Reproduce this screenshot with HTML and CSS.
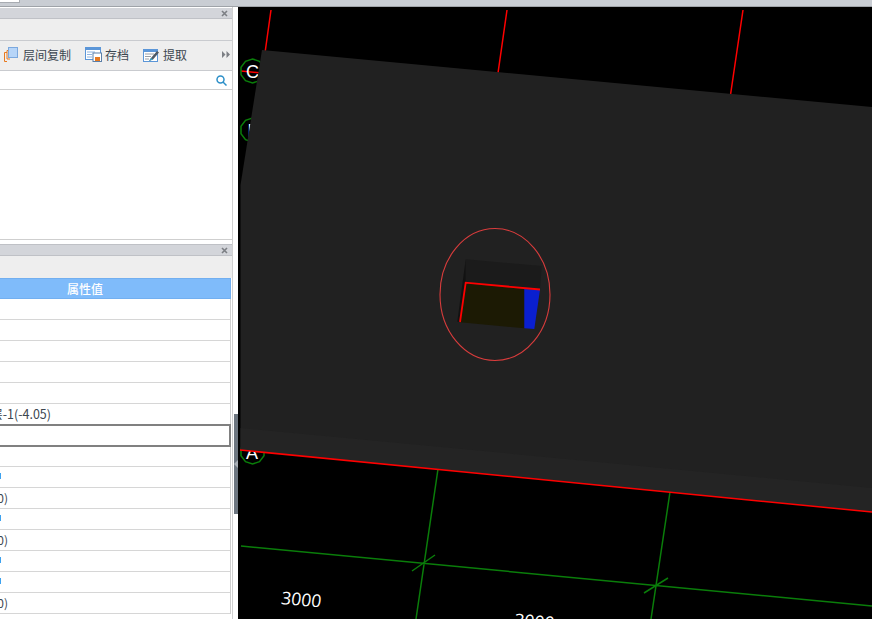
FILE: index.html
```html
<!DOCTYPE html>
<html lang="zh-CN">
<head>
<meta charset="utf-8">
<title>属性</title>
<link rel="stylesheet" href="styles.css">
</head>
<body>
<header class="topbar"><div class="tab"></div></header>
<main class="shell">
  <aside class="sidebar">
    <section class="panel panel-top">
      <div class="title"><svg class="close" viewBox="0 0 7 7"><path d="M1 1l5 5M6 1L1 6"/></svg></div>
      <div class="subbar"></div>
      <div class="toolbar">
        <button class="tool tool-copy">
          <svg class="icon" width="14" height="15" viewBox="0 0 14 15">
            <path class="orange" d="M3 5.500H.5v9H3"/>
            <path class="orange" d="M5 3.500H3v8.500h3"/>
            <rect x="4.500" y=".5" width="9" height="10" fill="#b7d5f8" stroke="#7ba8de"/>
          </svg>层间复制</button>
        <button class="tool">
          <svg class="icon" width="17" height="15" viewBox="0 0 17 15">
            <rect x=".5" y=".5" width="15" height="12" fill="#fff" stroke="#5b96d8"/>
            <rect x="0" y="0" width="16" height="3" fill="#5b96d8"/>
            <path d="M2 5h8M2 7.500h5M2 10h5" stroke="#8fb4e0"/>
            <rect x="8" y="6" width="8.500" height="8.500" fill="#fff" stroke="#5b7fa8"/>
            <rect x="10" y="10" width="5" height="4" fill="#e8791e"/>
          </svg>存档</button>
        <button class="tool">
          <svg class="icon" width="17" height="14" viewBox="0 0 17 14">
            <rect x=".5" y="1.500" width="14" height="12" fill="#fff" stroke="#5b96d8"/>
            <rect x="0" y="1" width="15" height="3" fill="#5b96d8"/>
            <path d="M2 6h9M2 8.500h6M2 11h4" stroke="#9a9fa6"/>
            <path d="M6 13l2-3 6-7 2 1.500-6 7z" fill="#4f5a66"/>
            <path d="M6 13l2-3 2 1.500z" fill="#37a3c9"/>
          </svg>提取</button>
        <svg class="more" viewBox="0 0 8 7"><path d="M0 0l3.500 3.500L0 7zM4.500 0L8 3.500 4.500 7z"/></svg>
      </div>
      <div class="search">
        <svg class="lens" viewBox="0 0 11 11"><circle cx="4.500" cy="4.500" r="3.500"/><path d="M7 7l3.500 3.500"/></svg>
      </div>
      <div class="list"></div>
    </section>
    <section class="panel panel-props">
      <div class="title"><svg class="close" viewBox="0 0 7 7"><path d="M1 1l5 5M6 1L1 6"/></svg></div>
      <div class="subbar subbar-tall"></div>
      <div class="table">
        <div class="head">属性值</div>
        <div class="row"></div>
        <div class="row"></div>
        <div class="row"></div>
        <div class="row"></div>
        <div class="row"></div>
        <div class="row"><span class="clip clip-wide"><span>层-1(-4.05)</span></span></div>
        <div class="row row-selected"></div>
        <div class="row"></div>
        <div class="row"><span class="tick"></span></div>
        <div class="row"><span class="clip"><span>(0)</span></span></div>
        <div class="row"><span class="tick"></span></div>
        <div class="row"><span class="clip"><span>(0)</span></span></div>
        <div class="row"><span class="tick"></span></div>
        <div class="row"><span class="tick"></span></div>
        <div class="row"><span class="clip"><span>(0)</span></span></div>
      </div>
    </section>
  </aside>
  <div class="splitter">
    <div class="grip"><svg class="grip-arrow" viewBox="0 0 4 8"><path d="M4 0v8L0 4z"/></svg></div>
  </div>
  <svg class="canvas" viewBox="238 7 634 612" preserveAspectRatio="xMinYMin slice">
    <defs>
      <polygon id="bubble" points="0,-12 7,-9.700 11.500,-3.700 11.500,3.700 7,9.700 0,12 -7,9.700 -11.500,3.700 -11.500,-3.700 -7,-9.700"/>
    </defs>
    <rect x="238" y="7" width="634" height="612" fill="#000"/>
    <g class="axis-red">
      <path d="M271 10L264 60M507 10L497 80M743 10L729 105"/>
      <path d="M241 71L262 73"/>
    </g>
    <g class="axis-green">
      <use href="#bubble" x="252.500" y="71"/>
      <use href="#bubble" x="252.500" y="130"/>
      <use href="#bubble" x="252.500" y="452"/>
      <path d="M438 469L416 619M670 492L651 619M241 546L872 606"/>
      <path d="M412 571L435 555M644 593L668 578"/>
    </g>
    <text class="label" x="246" y="78">C</text>
    <text class="label" x="247.500" y="137">B</text>
    <text class="label" x="246" y="458.500">A</text>
    <polygon points="262,50 872,107 872,512 240.500,450 240.500,185" fill="#212121"/>
    <polygon points="240.500,428 872,488 872,512 240.500,450" fill="#242424"/>
    <path class="axis-red" d="M240 450L872 512"/>
    <polygon points="465.700,259.300 541.700,266 540,289.500 465.700,283" fill="#1b1b1b"/>
    <polygon points="465.700,259.300 465.700,283 460,322 457.300,321.700" fill="#121212"/>
    <polygon points="465.700,283.300 524.300,289 524.300,328.300 460,322.300" fill="#1c1a04"/>
    <polygon points="524.300,289 540,289.700 534.300,329 524.300,328.300" fill="#0a1fd0"/>
    <path class="axis-red thick" d="M460 322L465.700 282.700L540 289.500"/>
    <ellipse cx="495" cy="294.500" rx="55" ry="66" fill="none" stroke="#d83c3c" stroke-width="1.100"/>
    <text class="dim" transform="translate(280.500 604) rotate(5) skewX(-3)">3000</text>
    <text class="dim" transform="translate(513.500 626) rotate(5) skewX(-3)">3000</text>
  </svg>
</main>
</body>
</html>
```
FILE: styles.css
```css
* { box-sizing: border-box; }
html, body { margin: 0; height: 100%; overflow: hidden; background: #fff; }
body { font: 12px "Noto Sans CJK SC", "Liberation Sans", sans-serif; color: #3c3c3c; }

.topbar { height: 7px; background: #c9cdd3; border-bottom: 1px solid #9fa3a8; }
.tab { width: 20px; height: 3px; background: #fff; border: solid #a8acb2; border-width: 0 1px 1px 0; }

.shell { display: flex; height: 612px; }
.sidebar { width: 233px; flex: none; border-right: 1px solid #d0d0d0; }
.splitter { width: 5px; flex: none; padding: 407px 0 0 1px; background: #fff; }
.grip { height: 100px; background: #6d7680; display: flex; align-items: center; }
.grip-arrow { width: 4px; height: 8px; fill: #a9afb6; }
.canvas { flex: 1; min-width: 0; height: 612px; display: block; }

.panel { background: #fff; }
.panel-top { height: 233px; border-bottom: 1px solid #cfcfcf; display: flex; flex-direction: column; padding-top: 1px; margin-bottom: 4px; }
.panel-props { border-top: 1px solid #bfc1c6; }

.title { height: 11px; background: #d3d5da; border-bottom: 1px solid #bfc1c6; display: flex; align-items: center; justify-content: flex-end; padding-right: 4px; flex: none; }
.close { width: 7px; height: 7px; stroke: #7c7f84; stroke-width: 1.600; fill: none; }
.subbar { height: 22px; background: #eeeeee; border-bottom: 1px solid #c9cbcf; flex: none; }
.subbar-tall { height: 22px; border-bottom: 0; }

.toolbar { height: 30px; background: #eeeeee; border-bottom: 1px solid #c9cbcf; display: flex; align-items: center; padding: 0 1px 2px 4px; flex: none; }
.tool { display: flex; align-items: center; gap: 3px; border: 0; padding: 0; margin: 0 14px 0 0; background: none; font: inherit; color: #3c4650; line-height: 16px; }
.tool-copy { gap: 5px; }
.icon { flex: none; }
.orange { fill: none; stroke: #e8791e; }
.more { width: 8px; height: 7px; fill: #7c7f84; margin-left: auto; margin-right: 1px; }

.search { height: 19px; border-bottom: 1px solid #cfcfcf; display: flex; align-items: center; justify-content: flex-end; padding-right: 5px; flex: none; }
.lens { width: 11px; height: 11px; fill: none; stroke: #2c8fc8; stroke-width: 1.500; }
.list { flex: 1; }

.table { width: 231px; border-right: 1px solid #cfcfcf; }
.head { height: 21px; background: #7fbbfa; border: 1px solid #72aff0; border-left: 0; color: #fff; font-weight: 500; text-align: center; line-height: 19px; padding-right: 60px; margin-right: -1px; }
.row { height: 21px; border-bottom: 1px solid #d6d6d6; display: flex; align-items: center; color: #3c4650; }
.row-selected { border: 2px solid #808080; border-left: 0; margin: -1px -1px -1px 0; height: 23px; }
.clip { display: flex; justify-content: flex-end; overflow: hidden; width: 8px; white-space: nowrap; flex: none; margin-top: -2px; line-height: 17px; }
.clip-wide { width: 51px; font-size: 12.500px; }
.clip > span { flex: none; }
.tick { width: 1px; height: 6px; background: #3da2ef; margin-top: -2px; }

.axis-red { stroke: #f00; stroke-width: 1.500; fill: none; }
.thick { stroke-width: 1.800; }
.axis-green { stroke: #0a7d0a; stroke-width: 1.500; fill: none; }
.label { font: 18px "Liberation Sans", sans-serif; fill: #fff; }
.dim { font: 17.500px "Open Sans", sans-serif; fill: #fff; }
```
